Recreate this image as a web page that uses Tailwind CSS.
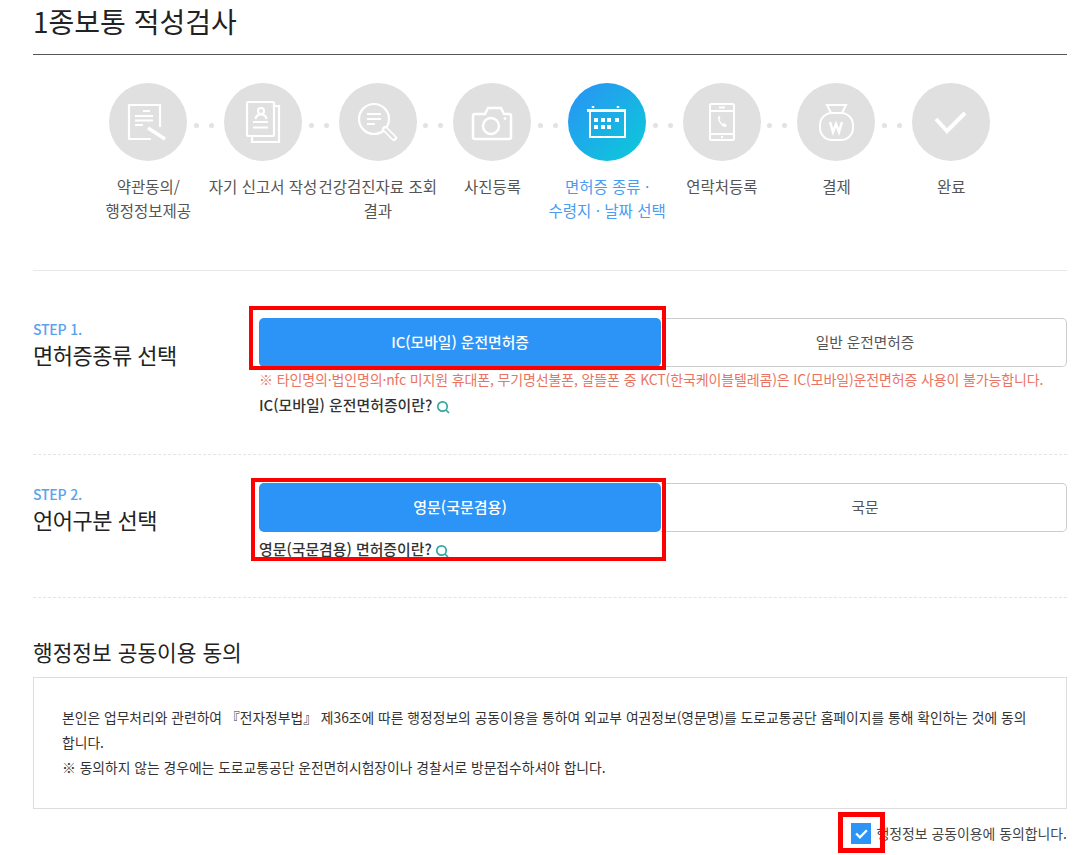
<!DOCTYPE html>
<html lang="ko">
<head>
    <meta charset="UTF-8">
    <title>1종보통 적성검사</title>
    <script src="https://cdn.jsdelivr.net/npm/@tailwindcss/browser@4"></script>
</head>
<body class="bg-white h-screen overflow-hidden relative font-['Noto_Sans_CJK_KR','Noto_Sans',sans-serif] text-[#333]">
    <div class="mx-[33px] w-[1034px]">
        <h1 class="h-[55px] border-b border-[#555] text-[28px] leading-[42px] text-[#222]">1종보통 적성검사</h1>

        <!-- progress steps -->
        <ol class="flex pl-[58px] pt-[28px] h-[216px] border-b border-[#e8e8e8]">
            <li class="relative w-[114.7px] flex flex-col items-center text-center">
                <div class="w-[78px] h-[78px] rounded-full bg-[#e0e0e0]">
                    <svg viewBox="0 0 78 78" class="w-full h-full" fill="none" stroke="#fff" stroke-width="2.200">
                        <path d="M42 56H20V22H51V44"/><path d="M34 28h7M26 33h18M26 37.500h18M26 42h8"/><path d="M39 45l17 11" stroke-width="3.500"/>
                    </svg>
                </div>
                <span class="absolute left-[103px] top-[40px] flex gap-[10px]"><i class="w-[5px] h-[5px] rounded-full bg-[#e2e2e2]"></i><i class="w-[5px] h-[5px] rounded-full bg-[#e2e2e2]"></i></span>
                <p class="mt-[13px] text-[15.500px] leading-[24px] text-[#555] whitespace-nowrap">약관동의/<br>행정정보제공</p>
            </li>
            <li class="relative w-[114.7px] flex flex-col items-center text-center">
                <div class="w-[78px] h-[78px] rounded-full bg-[#e0e0e0]">
                    <svg viewBox="0 0 78 78" class="w-full h-full" fill="none" stroke="#fff" stroke-width="2.200">
                        <rect x="23" y="19" width="27" height="34" rx="1.500"/><path d="M50 23h5v36H28v-6"/><circle cx="37" cy="28" r="3"/><path d="M31.500 36c.5-3 2.500-4.500 5.500-4.500s5 1.500 5.500 4.500"/><path d="M29 39h15M29 44.500h15"/>
                    </svg>
                </div>
                <span class="absolute left-[103px] top-[40px] flex gap-[10px]"><i class="w-[5px] h-[5px] rounded-full bg-[#e2e2e2]"></i><i class="w-[5px] h-[5px] rounded-full bg-[#e2e2e2]"></i></span>
                <p class="mt-[13px] text-[15.500px] leading-[24px] text-[#555] whitespace-nowrap">자기 신고서 작성</p>
            </li>
            <li class="relative w-[114.7px] flex flex-col items-center text-center">
                <div class="w-[78px] h-[78px] rounded-full bg-[#e0e0e0]">
                    <svg viewBox="0 0 78 78" class="w-full h-full" fill="none" stroke="#fff" stroke-width="2.200">
                        <circle cx="35" cy="36" r="15"/><path d="M28 31h14M28 36h14M28 41h8"/><path d="M46 46l9 9" stroke-width="6" stroke-linecap="round"/><path d="M46.500 46.500l8 8" stroke="#e0e0e0" stroke-width="2.500" stroke-linecap="round"/>
                    </svg>
                </div>
                <span class="absolute left-[103px] top-[40px] flex gap-[10px]"><i class="w-[5px] h-[5px] rounded-full bg-[#e2e2e2]"></i><i class="w-[5px] h-[5px] rounded-full bg-[#e2e2e2]"></i></span>
                <p class="mt-[13px] text-[15.500px] leading-[24px] text-[#555] w-[124px] shrink-0 break-keep">건강검진자료 조회 결과</p>
            </li>
            <li class="relative w-[114.7px] flex flex-col items-center text-center">
                <div class="w-[78px] h-[78px] rounded-full bg-[#e0e0e0]">
                    <svg viewBox="0 0 78 78" class="w-full h-full" fill="none" stroke="#fff" stroke-width="2.500">
                        <path d="M22 31h10l3-6h13l3 6h5a2 2 0 0 1 2 2v21a2 2 0 0 1-2 2H22a2 2 0 0 1-2-2V33a2 2 0 0 1 2-2z"/><circle cx="38" cy="43" r="8"/><circle cx="52" cy="35.500" r="1" fill="#fff" stroke-width="1"/>
                    </svg>
                </div>
                <span class="absolute left-[103px] top-[40px] flex gap-[10px]"><i class="w-[5px] h-[5px] rounded-full bg-[#e2e2e2]"></i><i class="w-[5px] h-[5px] rounded-full bg-[#e2e2e2]"></i></span>
                <p class="mt-[13px] text-[15.500px] leading-[24px] text-[#555] whitespace-nowrap">사진등록</p>
            </li>
            <li class="relative w-[114.7px] flex flex-col items-center text-center">
                <div class="w-[78px] h-[78px] rounded-full bg-linear-to-br from-[#2a90f6] to-[#0ccbd6]">
                    <svg viewBox="0 0 78 78" class="w-full h-full" fill="none" stroke="#fff" stroke-width="2">
                        <path d="M22 27v27h35V27"/><path d="M19 27.500h39" stroke-width="3"/><path d="M25 25v-2M50 25v-2" stroke-width="2.500"/>
                        <g fill="#fff" stroke="none"><rect x="26" y="35" width="4" height="4"/><rect x="33" y="35" width="4" height="4"/><rect x="39" y="35" width="4" height="4"/><rect x="47" y="35" width="4" height="4"/><rect x="26" y="42" width="4" height="4"/><rect x="33" y="42" width="4" height="4"/><rect x="39" y="42" width="4" height="4"/></g>
                    </svg>
                </div>
                <span class="absolute left-[103px] top-[40px] flex gap-[10px]"><i class="w-[5px] h-[5px] rounded-full bg-[#e2e2e2]"></i><i class="w-[5px] h-[5px] rounded-full bg-[#e2e2e2]"></i></span>
                <p class="mt-[13px] text-[15.500px] leading-[24px] text-[#4a9cf0] whitespace-nowrap">면허증 종류 ·<br>수령지 · 날짜 선택</p>
            </li>
            <li class="relative w-[114.7px] flex flex-col items-center text-center">
                <div class="w-[78px] h-[78px] rounded-full bg-[#e0e0e0]">
                    <svg viewBox="0 0 78 78" class="w-full h-full" fill="none" stroke="#fff" stroke-width="2">
                        <rect x="27" y="21" width="24" height="36" rx="1.500"/><path d="M27 28h24M27 51h24"/><path d="M36 24.500h6M38 54h2"/><path d="M35.500 33.500c-1 1-1 3 1 6s4.500 5 6 4.500l1.500-1.500-2.500-2.500-1.500 1c-1-.5-3-3-3.500-4.500l1-1.500-1-2.500z" fill="#fff" stroke="none"/>
                    </svg>
                </div>
                <span class="absolute left-[103px] top-[40px] flex gap-[10px]"><i class="w-[5px] h-[5px] rounded-full bg-[#e2e2e2]"></i><i class="w-[5px] h-[5px] rounded-full bg-[#e2e2e2]"></i></span>
                <p class="mt-[13px] text-[15.500px] leading-[24px] text-[#555] whitespace-nowrap">연락처등록</p>
            </li>
            <li class="relative w-[114.7px] flex flex-col items-center text-center">
                <div class="w-[78px] h-[78px] rounded-full bg-[#e0e0e0]">
                    <svg viewBox="0 0 78 78" class="w-full h-full" fill="none" stroke="#fff" stroke-width="2">
                        <path d="M30 22h19l-4 8H34z"/><rect x="23" y="30" width="33" height="27" rx="12"/><path d="M33 39l3 10 3-8 3 8 3-10" stroke-width="2.500"/>
                    </svg>
                </div>
                <span class="absolute left-[103px] top-[40px] flex gap-[10px]"><i class="w-[5px] h-[5px] rounded-full bg-[#e2e2e2]"></i><i class="w-[5px] h-[5px] rounded-full bg-[#e2e2e2]"></i></span>
                <p class="mt-[13px] text-[15.500px] leading-[24px] text-[#555] whitespace-nowrap">결제</p>
            </li>
            <li class="relative w-[114.7px] flex flex-col items-center text-center">
                <div class="w-[78px] h-[78px] rounded-full bg-[#e0e0e0]">
                    <svg viewBox="0 0 78 78" class="w-full h-full" fill="none" stroke="#fff" stroke-width="4">
                        <path d="M24 36l11 12 18-18"/>
                    </svg>
                </div>
                <p class="mt-[13px] text-[15.500px] leading-[24px] text-[#555] whitespace-nowrap">완료</p>
            </li>
        </ol>

        <!-- STEP 1 -->
        <section class="flex h-[184px] pt-[47px] border-b border-dashed border-[#e4e4e4]">
            <div class="w-[226px] pt-[3px]">
                <p class="text-[14px] leading-[16px] font-medium text-[#5aa2ee] tracking-[-0.2px]">STEP 1.</p>
                <h2 class="mt-[1px] text-[22px] leading-[32px] text-[#222] tracking-[-0.5px]">면허증종류 선택</h2>
            </div>
            <div class="w-[808px]">
                <div class="flex h-[49px]">
                    <button class="w-[402px] rounded-[5px] bg-[#2b94f6] text-white text-[14.800px] font-medium">IC(모바일) 운전면허증</button>
                    <button class="flex-1 pl-[3px] rounded-r-[5px] border border-l-0 border-[#ccc] text-[#555] text-[14.700px]">일반 운전면허증</button>
                </div>
                <p class="text-[14px] leading-[22px] text-[#ea7463] mt-[1px] whitespace-nowrap tracking-[-0.13px]">※ 타인명의·법인명의·nfc 미지원 휴대폰, 무기명선불폰, 알뜰폰 중 KCT(한국케이블텔레콤)은 IC(모바일)운전면허증 사용이 불가능합니다.</p>
                <p class="mt-[4px] flex items-center gap-[4px] text-[14.900px] leading-[22px] font-medium text-[#333]">IC(모바일) 운전면허증이란?
                    <svg viewBox="0 0 14 14" class="w-[14px] h-[14px] mt-[3px]" fill="none" stroke="#35a7a3" stroke-width="1.700"><circle cx="6.500" cy="6.500" r="4.700"/><path d="M10 10l3 3"/></svg>
                </p>
            </div>
        </section>

        <!-- STEP 2 -->
        <section class="flex h-[143px] pt-[28px] border-b border-dashed border-[#e4e4e4]">
            <div class="w-[226px] pt-[3px]">
                <p class="text-[14px] leading-[16px] font-medium text-[#5aa2ee] tracking-[-0.2px]">STEP 2.</p>
                <h2 class="mt-[1px] text-[22px] leading-[32px] text-[#222] tracking-[-0.5px]">언어구분 선택</h2>
            </div>
            <div class="w-[808px]">
                <div class="flex h-[49px]">
                    <button class="w-[402px] rounded-[5px] bg-[#2b94f6] text-white text-[15px] font-medium">영문(국문겸용)</button>
                    <button class="flex-1 pl-[3px] rounded-r-[5px] border border-l-0 border-[#ccc] text-[#555] text-[14.700px]">국문</button>
                </div>
                <p class="mt-[6px] flex items-center gap-[3px] text-[14.900px] leading-[22px] font-medium text-[#333]">영문(국문겸용) 면허증이란?
                    <svg viewBox="0 0 14 14" class="w-[14px] h-[14px] mt-[3px]" fill="none" stroke="#35a7a3" stroke-width="1.700"><circle cx="6.500" cy="6.500" r="4.700"/><path d="M10 10l3 3"/></svg>
                </p>
            </div>
        </section>

        <!-- agreement -->
        <h2 class="mt-[40px] text-[21.400px] leading-[28px] text-[#222]">행정정보 공동이용 동의</h2>
        <div class="mt-[11px] h-[132px] border border-[#ddd] pl-[28px] pr-[28px] pt-[27px] text-[13.800px] leading-[25px] text-[#333]">
            <p>본인은 업무처리와 관련하여 『전자정부법』 제36조에 따른 행정정보의 공동이용을 통하여 외교부 여권정보(영문명)를 도로교통공단 홈페이지를 통해 확인하는 것에 동의합니다.</p>
            <p>※ 동의하지 않는 경우에는 도로교통공단 운전면허시험장이나 경찰서로 방문접수하셔야 합니다.</p>
        </div>
        <label class="mt-[13px] flex items-center justify-end gap-[5px] text-[13.900px] leading-[22px] text-[#444]">
            <span class="w-[20px] h-[21px] bg-[#2b94f6] flex items-center justify-center">
                <svg viewBox="0 0 14 14" class="w-[15px] h-[15px]" fill="none" stroke="#fff" stroke-width="2.200"><path d="M2 7l3.500 3.500L12 4"/></svg>
            </span>
            행정정보 공동이용에 동의합니다.
        </label>
    </div>

    <!-- red review marks drawn over the page -->
    <div class="absolute left-[249px] top-[306px] w-[417px] h-[64px] border-[4px] border-[#f00] pointer-events-none"></div>
    <div class="absolute left-[251px] top-[478px] w-[415px] h-[83px] border-[4px] border-[#f00] pointer-events-none"></div>
    <div class="absolute left-[838px] top-[812px] w-[47px] h-[41px] border-[5px] border-[#f00] pointer-events-none"></div>
</body>
</html>
